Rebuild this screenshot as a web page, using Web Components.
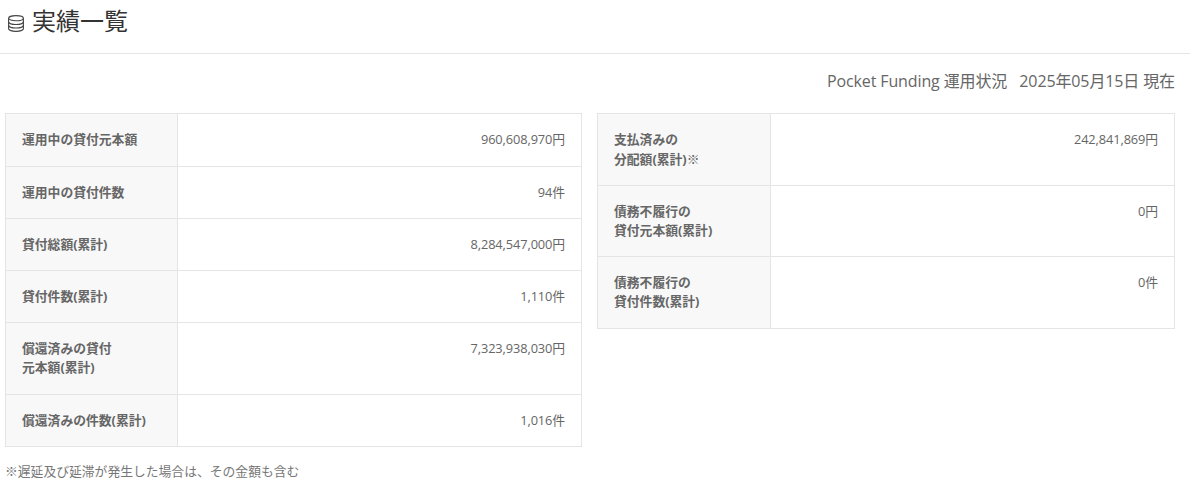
<!DOCTYPE html>
<html lang="ja">
<head>
<meta charset="utf-8">
<title>実績一覧</title>
<style>
  html, body { margin: 0; background: #fff; }
  body { font-family: "Open Sans", "Noto Sans CJK JP", sans-serif; color: #555; }
</style>
</head>
<body>
<results-page>
  <page-heading slot="heading">実績一覧</page-heading>
  <status-line slot="status">Pocket Funding 運用状況&nbsp;&nbsp; 2025年05月15日 現在</status-line>
  <result-table style="--label-width: 172px">
    <result-row><span slot="label">運用中の貸付元本額</span>960,608,970円</result-row>
    <result-row><span slot="label">運用中の貸付件数</span>94件</result-row>
    <result-row><span slot="label">貸付総額(累計)</span>8,284,547,000円</result-row>
    <result-row><span slot="label">貸付件数(累計)</span>1,110件</result-row>
    <result-row><span slot="label">償還済みの貸付<br>元本額(累計)</span>7,323,938,030円</result-row>
    <result-row><span slot="label">償還済みの件数(累計)</span>1,016件</result-row>
  </result-table>
  <result-table style="--label-width: 173px">
    <result-row><span slot="label">支払済みの<br>分配額(累計)※</span>242,841,869円</result-row>
    <result-row><span slot="label">債務不履行の<br>貸付元本額(累計)</span>0円</result-row>
    <result-row><span slot="label">債務不履行の<br>貸付件数(累計)</span>0件</result-row>
  </result-table>
  <span slot="note">※遅延及び延滞が発生した場合は、その金額も含む</span>
</results-page>

<script>
class ResultsPage extends HTMLElement {
  constructor() {
    super();
    this.attachShadow({ mode: "open" }).innerHTML = `
      <style>
        :host { display: block; }
        .status { padding: 15px 15px 0 0; }
        .tables {
          display: grid;
          grid-template-columns: 576px 577px;
          gap: 16px;
          align-items: start;
          margin: 20.4px 0 0 5px;
        }
        .note {
          margin: 14.6px 0 0 5px;
          font-size: 12.8px;
          line-height: 20px;
          color: #777;
        }
      </style>
      <slot name="heading"></slot>
      <div class="status"><slot name="status"></slot></div>
      <div class="tables"><slot></slot></div>
      <div class="note"><slot name="note"></slot></div>
    `;
  }
}

class PageHeading extends HTMLElement {
  constructor() {
    super();
    this.attachShadow({ mode: "open" }).innerHTML = `
      <style>
        :host {
          display: flex;
          align-items: center;
          gap: 8px;
          height: 53px;
          padding: 0 0 0 8px;
          border-bottom: 1px solid #e5e5e5;
          color: #333;
          font-size: 24px;
          font-weight: 400;
        }
        .title { margin-top: -11px; line-height: 24px; }
        svg { margin-top: -7px; flex: none; }
      </style>
      <svg width="16" height="17" viewBox="0 0 16 17" fill="none" stroke="#444" stroke-width="1.1">
        <ellipse cx="8" cy="3.2" rx="7.4" ry="2.6"/>
        <path d="M.6 3.2v10.4c0 1.5 3.3 2.8 7.4 2.8s7.4-1.3 7.4-2.8V3.2"/>
        <path d="M.6 6.7c0 1.5 3.3 2.8 7.4 2.8s7.4-1.3 7.4-2.8"/>
        <path d="M.6 10.2c0 1.5 3.3 2.8 7.4 2.8s7.4-1.3 7.4-2.8"/>
      </svg>
      <span class="title"><slot></slot></span>
    `;
  }
}

class StatusLine extends HTMLElement {
  constructor() {
    super();
    this.attachShadow({ mode: "open" }).innerHTML = `
      <style>
        :host {
          display: block;
          text-align: right;
          font-size: 16px;
          line-height: 24px;
          letter-spacing: -0.12px;
          color: #666;
        }
      </style>
      <slot></slot>
    `;
  }
}

class ResultTable extends HTMLElement {
  constructor() {
    super();
    this.attachShadow({ mode: "open" }).innerHTML = `
      <style>
        :host {
          display: table;
          width: 100%;
          border-collapse: collapse;
          table-layout: fixed;
          font-size: 12.8px;
          line-height: 1.5;
        }
      </style>
      <slot></slot>
    `;
  }
}

class ResultRow extends HTMLElement {
  constructor() {
    super();
    this.attachShadow({ mode: "open" }).innerHTML = `
      <style>
        :host { display: table-row; }
        .label, .value {
          display: table-cell;
          border: 1px solid #e5e5e5;
          padding: 16px;
          vertical-align: top;
        }
        .label {
          width: var(--label-width);
          box-sizing: border-box;
          background: #f8f8f8;
          font-weight: 700;
          color: #666;
        }
        .value { text-align: right; color: #666; letter-spacing: -0.1px; }
      </style>
      <div class="label"><slot name="label"></slot></div>
      <div class="value"><slot></slot></div>
    `;
  }
}

customElements.define("results-page", ResultsPage);
customElements.define("page-heading", PageHeading);
customElements.define("status-line", StatusLine);
customElements.define("result-table", ResultTable);
customElements.define("result-row", ResultRow);
</script>
</body>
</html>
